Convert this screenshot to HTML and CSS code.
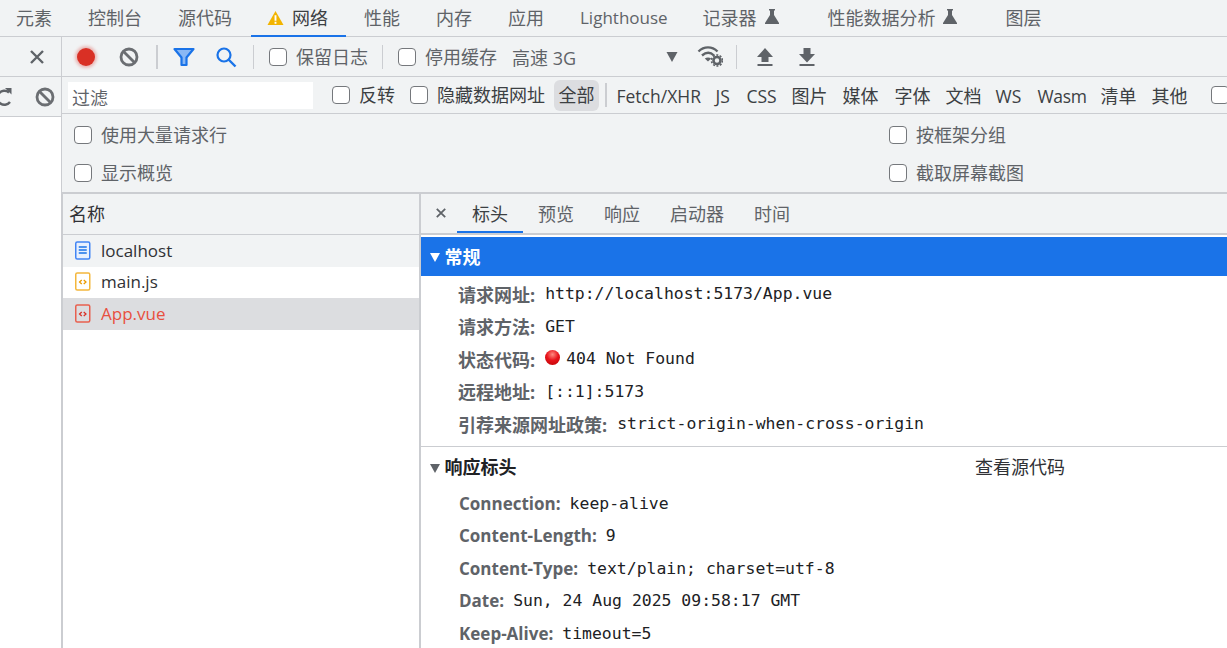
FILE: index.html
```html
<!DOCTYPE html>
<html lang="zh-CN">
<head>
<meta charset="utf-8">
<title>DevTools Network</title>
<link rel="stylesheet" href="styles.css">
</head>
<body>
<div class="app">
  <nav class="tabs">
    <span class="tab">元素</span>
    <span class="tab">控制台</span>
    <span class="tab">源代码</span>
    <span class="tab active">
      <svg class="warn" width="17" height="16" viewBox="0 0 18 16"><path d="M9 .5 17.500 15.500H.5Z" fill="#f2b400"/><path d="M8 5h2v6H8zM8 12h2v2H8z" fill="#fff"/></svg>
      <span>网络</span>
    </span>
    <span class="tab">性能</span>
    <span class="tab">内存</span>
    <span class="tab">应用</span>
    <span class="tab latin">Lighthouse</span>
    <span class="tab exp rec">记录器
      <svg width="14" height="15" viewBox="0 0 14 15"><path d="M4 0h6v1.500H9V6l5 8v1H0v-1l5-8V1.500H4Z" fill="#5f6368"/></svg>
    </span>
    <span class="tab exp perf">性能数据分析
      <svg width="14" height="15" viewBox="0 0 14 15"><path d="M4 0h6v1.500H9V6l5 8v1H0v-1l5-8V1.500H4Z" fill="#5f6368"/></svg>
    </span>
    <span class="tab">图层</span>
  </nav>

  <div class="workspace">
    <aside class="side">
      <div class="side-top">
        <svg width="16" height="16" viewBox="0 0 16 16"><path d="M2 2 14 14M14 2 2 14" stroke="#5f6368" stroke-width="2.400"/></svg>
      </div>
      <div class="side-tools">
        <svg class="reload" width="18" height="20" viewBox="0 0 18 20"><path d="M12 5.500A7 7 0 1 0 13 15" fill="none" stroke="#5f6368" stroke-width="2.400"/><path d="M8 1h6.500v6.500Z" fill="#5f6368"/></svg>
        <svg width="20" height="20" viewBox="0 0 20 20"><circle cx="10" cy="10" r="8" fill="none" stroke="#6b6e72" stroke-width="2.800"/><path d="M4.500 4.500 15.500 15.500" stroke="#6b6e72" stroke-width="2.800"/></svg>
      </div>
    </aside>

    <main class="main">
      <div class="toolbar">
        <span class="record"></span>
        <svg class="block" width="20" height="20" viewBox="0 0 20 20"><circle cx="10" cy="10" r="8" fill="none" stroke="#6b6e72" stroke-width="2.800"/><path d="M4.500 4.500 15.500 15.500" stroke="#6b6e72" stroke-width="2.800"/></svg>
        <span class="sep sep-a"></span>
        <svg class="funnel" width="22" height="20" viewBox="0 0 22 20"><path d="M1.500 2h19L13.500 10.500V18h-5V10.500Z" fill="#8ab8f4" stroke="#1a73e8" stroke-width="2.200" stroke-linejoin="round"/></svg>
        <svg class="search" width="22" height="22" viewBox="0 0 22 22"><circle cx="9" cy="9" r="6.500" fill="none" stroke="#1a73e8" stroke-width="2.200"/><path d="M13.500 13.500 20.500 20.500" stroke="#1a73e8" stroke-width="2.400"/></svg>
        <span class="sep sep-b"></span>
        <label class="check keep"><span class="box"></span>保留日志</label>
        <span class="sep sep-c"></span>
        <label class="check cache"><span class="box"></span>停用缓存</label>
        <span class="throttle">高速 3G</span>
        <svg class="caret" width="12" height="10" viewBox="0 0 12 10"><path d="M.5 0h11L6 10Z" fill="#5f6368"/></svg>
        <svg class="wifi" width="26" height="22" viewBox="0 0 26 22"><path d="M1.500 6.500C7 1 15 1 20.500 6.500M5 10.500C9 7 13.500 7 17 10.500" fill="none" stroke="#5f6368" stroke-width="2.400"/><path d="M11 16.500 7.800 13.500C9.500 12 12.500 12 14.200 13.500Z" fill="#5f6368"/><circle cx="20" cy="15.500" r="3.500" fill="none" stroke="#5f6368" stroke-width="2.600"/><circle cx="20" cy="15.500" r="5.500" fill="none" stroke="#5f6368" stroke-width="1.600" stroke-dasharray="2 1.500"/></svg>
        <span class="sep sep-d"></span>
        <svg class="up" width="18" height="20" viewBox="0 0 18 20"><path d="M9 1 17 10H12.500V15H5.500V10H1ZM1.500 17H16.500V19H1.500Z" fill="#5f6368"/></svg>
        <svg class="down" width="18" height="20" viewBox="0 0 18 20"><path d="M5.500 1H12.500V7H17L9 15.500 1 7H5.500ZM1.500 17H16.500V19H1.500Z" fill="#5f6368"/></svg>
      </div>

      <div class="filterbar">
        <div class="filter-input">过滤</div>
        <label class="check invert"><span class="box"></span>反转</label>
        <label class="check hide-data"><span class="box"></span>隐藏数据网址</label>
        <span class="chip">全部</span>
        <span class="sep sep-e"></span>
        <span class="types">
          <span class="t-fetch">Fetch/XHR</span><span class="t-js">JS</span><span class="t-css">CSS</span><span>图片</span><span>媒体</span><span class="t-font">字体</span><span>文档</span><span class="t-ws">WS</span><span class="t-wasm">Wasm</span><span class="t-man">清单</span><span>其他</span>
        </span>
        <span class="box last-box"></span>
      </div>

      <div class="settings">
        <div class="settings-col first">
          <label class="check"><span class="box"></span>使用大量请求行</label>
          <label class="check"><span class="box"></span>显示概览</label>
        </div>
        <div class="settings-col">
          <label class="check"><span class="box"></span>按框架分组</label>
          <label class="check"><span class="box"></span>截取屏幕截图</label>
        </div>
      </div>

      <div class="split">
        <section class="names">
          <div class="names-head">名称</div>
          <div class="req hover">
            <svg width="16" height="19" viewBox="0 0 16 19"><rect x=".75" y="1" width="14" height="17" rx="1.500" fill="#e8f0fe" stroke="#4285f4" stroke-width="1.500"/><path d="M3.750 6h8M3.750 9h8M3.750 12h8" stroke="#1a73e8" stroke-width="1.400"/></svg>
            <span>localhost</span>
          </div>
          <div class="req">
            <svg width="16" height="19" viewBox="0 0 16 19"><rect x=".75" y="1" width="14" height="17" rx="1.500" fill="#fff" stroke="#f4b73d" stroke-width="1.500"/><path d="M6.750 8 4.550 10 6.750 12M8.750 8l2.200 2-2.200 2" fill="none" stroke="#ea9b00" stroke-width="1.300"/></svg>
            <span>main.js</span>
          </div>
          <div class="req selected">
            <svg width="16" height="19" viewBox="0 0 16 19"><rect x=".75" y="1" width="14" height="17" rx="1.500" fill="none" stroke="#e8604f" stroke-width="1.500"/><path d="M6.750 8 4.550 10 6.750 12M8.750 8l2.200 2-2.200 2" fill="none" stroke="#d93025" stroke-width="1.300"/></svg>
            <span>App.vue</span>
          </div>
        </section>

        <section class="details">
          <div class="detail-tabs">
            <svg class="dclose" width="10" height="10" viewBox="0 0 10 10"><path d="M.8.8 9.200 9.200M9.200.8.8 9.200" stroke="#5f6368" stroke-width="1.800"/></svg>
            <span class="dtab active">标头</span>
            <span class="dtab">预览</span>
            <span class="dtab">响应</span>
            <span class="dtab">启动器</span>
            <span class="dtab">时间</span>
          </div>
          <div class="general">
            <div class="sec-head blue"><i class="tri"></i>常规</div>
            <div class="rows">
              <div class="row"><b>请求网址:</b><code>http://localhost:5173/App.vue</code></div>
              <div class="row"><b>请求方法:</b><code>GET</code></div>
              <div class="row"><b>状态代码:</b><span class="dot"></span><code class="status">404 Not Found</code></div>
              <div class="row"><b>远程地址:</b><code>[::1]:5173</code></div>
              <div class="row"><b>引荐来源网址政策:</b><code>strict-origin-when-cross-origin</code></div>
            </div>
          </div>
          <div class="response">
            <div class="sec-head resp-head"><i class="tri"></i>响应标头<span class="raw">查看源代码</span></div>
            <div class="row"><b>Connection:</b><code>keep-alive</code></div>
            <div class="row"><b>Content-Length:</b><code>9</code></div>
            <div class="row"><b>Content-Type:</b><code>text/plain; charset=utf-8</code></div>
            <div class="row"><b>Date:</b><code>Sun, 24 Aug 2025 09:58:17 GMT</code></div>
            <div class="row"><b>Keep-Alive:</b><code>timeout=5</code></div>
          </div>
        </section>
      </div>
    </main>
  </div>
</div>
</body>
</html>
```
FILE: styles.css
```css
* { box-sizing: border-box; }
html, body { margin: 0; height: 100%; overflow: hidden; background: #fff; }
body {
  font-family: "Open Sans", "Noto Sans CJK SC", sans-serif;
  font-size: 18px;
  color: #303135;
}
.app { width: 1227px; height: 648px; display: flex; flex-direction: column; overflow: hidden; }
.latin { font-size: 17px; }

/* Top tabs */
.tabs {
  flex: none; height: 37px; display: flex; align-items: stretch;
  padding-left: 0; margin-left: -2px;
  background: #f1f3f4; border-bottom: 1px solid #cbcdd1;
  color: #5f6368; white-space: nowrap;
}
.tab { padding: 0 18px; display: flex; align-items: center; line-height: 34px; height: 36px; }
.tab.active { color: #3c4043; margin-left: 1px; padding: 0 0 0 16px; width: 95px; border-bottom: 2px solid #1a73e8; height: 37px; margin-bottom: -1px; }
.warn { margin-right: 8px; flex: none; }
.tab.exp svg { margin-left: 8px; margin-top: -3px; flex: none; }
.tab.rec { width: 124px; padding-left: 17px; }
.tab.perf { width: 178px; }
.tab.perf svg { margin-left: 7px; }

/* Workspace */
.workspace { flex: 1; display: flex; min-height: 0; }
.side { flex: none; width: 62px; border-right: 1px solid #cbcdd1; }
.side-top { height: 40px; background: #f1f3f4; border-bottom: 1px solid #cbcdd1; display: flex; align-items: center; justify-content: flex-end; padding-right: 16px; }
.side-tools { height: 40px; background: #f1f3f4; border-bottom: 1px solid #cbcdd1; display: flex; align-items: center; overflow: hidden; padding-left: 35px; position: relative; }
.reload { position: absolute; left: -3px; top: 10px; }
.main { flex: 1; min-width: 0; display: flex; flex-direction: column; }

/* Toolbar */
.toolbar { flex: none; height: 40px; display: flex; align-items: center; background: #f1f3f4; border-bottom: 1px solid #cbcdd1; color: #5f6368; white-space: nowrap; }
.record { flex: none; width: 18px; height: 18px; margin-left: 15px; border-radius: 50%; background: #d93025; box-shadow: 0 0 3px 2px rgba(217, 48, 37, .3); }
.block { margin-left: 24px; flex: none; }
.sep { flex: none; width: 1px; height: 24px; background: #cbcdd1; }
.sep-a { margin-left: 17px; width: 2px; }
.funnel { margin-left: 15px; flex: none; }
.search { margin-left: 20px; flex: none; }
.sep-b { margin-left: 16px; }
.sep-c { margin-left: 14px; }
.sep-d { margin-left: 13px; }
.check { display: inline-flex; align-items: center; white-space: nowrap; line-height: 24px; }
.box { flex: none; width: 18px; height: 18px; background: #fff; border: 1.500px solid #75787c; border-radius: 4px; margin-right: 9px; }
.keep { margin-left: 15px; }
.cache { margin-left: 15px; }
.throttle { margin-left: 15px; width: 145px; }
.caret { margin-left: 9px; flex: none; margin-right: 0; }
.wifi { margin-left: 19px; flex: none; margin-top: -2px; }
.up { margin-left: 19px; flex: none; }
.down { margin-left: 24px; flex: none; }

/* Filter bar */
.filterbar { flex: none; height: 37px; display: flex; align-items: center; background: #f1f3f4; border-bottom: 1px solid #cbcdd1; white-space: nowrap; color: #3c4043; overflow: hidden; }
.filter-input { flex: none; margin-left: 6px; width: 245px; height: 27px; background: #fff; padding-left: 4px; line-height: 33px; color: #5f6368; }
.invert { margin-left: 19px; }
.hide-data { margin-left: 15px; }
.chip { flex: none; margin-left: 9px; width: 45px; height: 31px; line-height: 30px; text-align: center; background: #dcdde0; border-radius: 6px; }
.sep-e { margin-left: 6px; width: 1.500px; }
.types { flex: none; margin-left: 10px; display: flex; align-items: baseline; gap: 15px; }
.t-fetch, .t-js, .t-css, .t-ws, .t-wasm { font-size: 17.500px; }
.t-fetch { width: 85px; }
.t-js { width: 16px; margin-left: -1px; }
.t-css { width: 30px; }
.t-font { margin-left: 1px; }
.t-ws { width: 27px; margin-left: -1px; }
.t-wasm { width: 47px; letter-spacing: -.3px; }
.t-man { margin-left: 1px; }
.last-box { margin-left: 23px; }

/* Settings */
.settings { flex: none; height: 80px; display: flex; background: #f1f3f4; color: #5f6368; border-bottom: 2px solid #cbcdd1; }
.settings-col { display: flex; flex-direction: column; align-items: flex-start; padding-top: 2px; }
.settings-col.first { width: 827px; padding-left: 12px; }
.settings-col .check { height: 39px; }

/* Split */
.split { flex: 1; min-height: 0; display: flex; }
.names { flex: none; width: 359px; border-left: 1px solid #cbcdd1; border-right: 2px solid #cbcdd1; }
.names-head { height: 41px; line-height: 41px; padding-left: 6px; background: #f1f3f4; border-bottom: 1px solid #cbcdd1; color: #303135; }
.req { height: 31.500px; display: flex; align-items: center; gap: 10px; padding-left: 12px; color: #303135; font-size: 17px; padding-bottom: 1px; }
.req svg { flex: none; }
.req.hover { background: #f1f3f4; }
.req.selected { background: #dcdde0; color: #e8503f; }

.details { flex: 1; min-width: 0; }
.detail-tabs { height: 41px; display: flex; align-items: stretch; background: #f1f3f4; border-bottom: 2px solid #cbcdd1; color: #5f6368; }
.dclose { flex: none; margin: 14px 11px 0 15px; }
.dtab { padding: 0 15px; line-height: 40px; height: 39px; }
.dtab.active { color: #3c4043; border-bottom: 2px solid #1a73e8; }
.general { margin-top: 2px; border-bottom: 1px solid #cbcdd1; padding-bottom: 6px; }
.sec-head { position: relative; display: flex; align-items: center; font-weight: 700; height: 39px; padding-left: 23.500px; color: #202124; }
.sec-head.blue { background: #1a73e8; color: #fff; padding-bottom: 1px; }
.resp-head { padding-bottom: 2px; }
.tri { position: absolute; left: 9px; top: 16px; width: 0; height: 0; border-style: solid; border-width: 9px 5.500px 0; border-color: #5f6368 transparent transparent; }
.blue .tri { border-top-color: #fff; }
.rows { padding-top: 1.300px; }
.rows .row b { margin-left: -1px; margin-right: 10px; }
.row { height: 32.500px; display: flex; align-items: center; padding-left: 38px; white-space: nowrap; }
.row b { font-weight: 700; color: #5f6368; margin-right: 9px; }
.response .row b { font-size: 17px; }
.row code { font-family: "DejaVu Sans Mono", monospace; font-size: 16.450px; color: #202124; }
.dot { flex: none; width: 15px; height: 15px; margin-right: 6px; margin-top: -3px; border-radius: 50%; background: radial-gradient(circle at 50% 30%, #ff8a80 0, #e8141c 45%, #b80000 100%); }
.response { padding-top: 1px; }
.raw { position: absolute; left: 554px; font-weight: 400; color: #303135; }
```
